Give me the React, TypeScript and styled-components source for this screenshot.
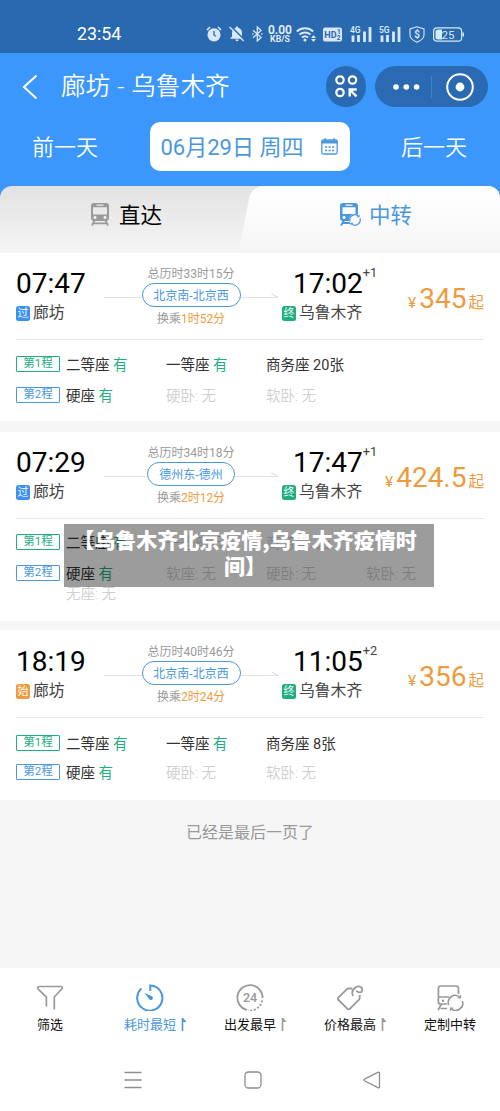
import React from "react";
import styled, { createGlobalStyle } from "styled-components";

const BLUE = "#4a97dd";
const GREEN = "#1fae81";
const ORANGE = "#ee9b40";

const GlobalStyle = createGlobalStyle`
  * { box-sizing: border-box; }
  body {
    margin: 0;
    background: #fff;
    font-family: Roboto, "Noto Sans CJK SC", sans-serif;
    font-weight: 400;
    color: #000;
  }
  svg { display: block; flex: none; }
  svg text { font-family: Roboto, sans-serif; }
`;

const Screen = styled.div`
  position: relative;
  display: flex;
  flex-direction: column;
  width: 500px;
  height: 1111px;
  overflow: hidden;
  white-space: nowrap;
  background: #f5f5f5;
`;

/* Status bar */
const StatusBar = styled.div`
  display: flex;
  align-items: center;
  height: 53px;
  padding: 15px 36px 0 77px;
  background: #2969b0;
  color: #fff;
`;
const Clock = styled.div`
  width: 129px;
  font-size: 17.8px;
  font-weight: 400;
  line-height: 20px;
`;
const StatusIcons = styled.div`
  display: grid;
  grid-template-columns: 23px 23px 15px 29px 27px 27px 29px 30px 24px 31px;
  align-items: center;
  color: #d9e8f8;
`;
const Speed = styled.div`
  width: 26px;
  font-size: 12px;
  font-weight: 600;
  line-height: 10px;
  text-align: center;
  color: #eaf3fc;
`;
const SpeedUnit = styled.div`
  font-size: 8.8px;
  line-height: 8px;
`;

/* Header */
const Header = styled.header`
  display: flex;
  flex-direction: column;
  height: 200px;
  background: #3c97fc;
  color: #fff;
`;
const TitleRow = styled.div`
  display: flex;
  align-items: center;
  height: 67px;
  padding: 0 12px 0 22px;
`;
const Title = styled.h1`
  flex: 1;
  margin: 0 0 0 23px;
  font-size: 24.6px;
  word-spacing: 1px;
  font-weight: 350;
  line-height: 30px;
`;
const RoundButton = styled.div`
  display: flex;
  align-items: center;
  justify-content: center;
  width: 40px;
  height: 41px;
  margin-right: 9px;
  border-radius: 21px;
  background: #296ab3;
`;
const Capsule = styled.div`
  display: flex;
  align-items: center;
  width: 113px;
  height: 41px;
  padding-left: 17px;
  border-radius: 21px;
  background: #296ab3;
`;
const CapsuleRule = styled.div`
  width: 1px;
  height: 22px;
  margin: 0 14px 0 11px;
  background: #4582c4;
`;
const DateRow = styled.div`
  display: flex;
  align-items: center;
  justify-content: space-between;
  height: 53px;
  padding: 0 33px 0 32px;
  font-size: 22px;
  font-weight: 350;
`;
const DateText = styled.span`
  padding-bottom: 4px;
`;
const DatePicker = styled.div`
  display: flex;
  align-items: center;
  justify-content: space-between;
  width: 200px;
  height: 49px;
  padding: 0 12px 0 11px;
  border-radius: 10px;
  background: #fff;
  color: ${BLUE};
  font-weight: 400;
`;
const Tabs = styled.nav`
  display: grid;
  grid-template-columns: 245px 255px;
  height: 67px;
  margin-top: 13px;
  overflow: hidden;
  border-radius: 12px 12px 0 0;
  background: linear-gradient(#e2e2e2, #f5f5f5);
`;
const Tab = styled.div<{ $active?: boolean }>`
  position: relative;
  display: flex;
  gap: ${(p) => (p.$active ? 8 : 9)}px;
  padding: 16px 0 0 ${(p) => (p.$active ? 94 : 90)}px;
  font-size: 21.5px;
  line-height: 27px;
  color: ${(p) => (p.$active ? BLUE : "#000")};
  & > * { position: relative; }
  ${(p) =>
    p.$active &&
    `&::before {
      content: "";
      position: absolute;
      inset: 0 -30px 0 0;
      border-radius: 12px 12px 0 0;
      background: linear-gradient(#fff, #f5f5f5);
      transform: skewX(-11deg);
    }`}
`;

/* Journey cards */
const Card = styled.section<{ $height: number; $gap: number }>`
  height: ${(p) => p.$height}px;
  margin-bottom: ${(p) => p.$gap}px;
  padding: 0 16px;
  background: #fff;
`;
const Summary = styled.div<{ $height: number }>`
  display: flex;
  height: ${(p) => p.$height}px;
  padding-top: ${(p) => p.$height - 71}px;
  border-bottom: 1px solid #e6e6e6;
`;
const Stop = styled.div<{ $width: number; $pad?: number }>`
  width: ${(p) => p.$width}px;
  margin-left: ${(p) => p.$pad ?? 0}px;
`;
const Time = styled.div<{ $indent?: number }>`
  display: flex;
  margin-top: 1px;
  padding-left: ${(p) => p.$indent ?? 0}px;
  font-size: 28px;
  line-height: 28px;
`;
const DayShift = styled.span`
  margin-top: -5px;
  font-size: 12.8px;
  line-height: 16px;
  color: #444;
`;
const City = styled.div`
  display: flex;
  align-items: center;
  gap: 3px;
  margin-top: 4px;
  font-size: 15.8px;
  line-height: 22px;
  color: #444;
`;
const Tag = styled.span<{ $color: string }>`
  width: 14px;
  height: 15px;
  border-radius: 2.5px;
  background: ${(p) => p.$color};
  color: #fff;
  font-size: 11px;
  font-weight: 350;
  line-height: 15px;
  text-align: center;
`;
const Transfer = styled.div`
  display: flex;
  flex-direction: column;
  align-items: center;
  width: 174px;
  margin-top: -2px;
  font-size: 12px;
  line-height: 14px;
  color: #999;
`;
const Route = styled.div`
  display: flex;
  align-items: center;
  width: 100%;
  height: 24px;
  margin: 2px 0 5px;
`;
const Line = styled.i`
  flex: 1;
  height: 1px;
  margin-top: 4px;
  background: #e2e2e2;
`;
const ArrowLine = styled(Line)`
  position: relative;
  &::after {
    content: "";
    position: absolute;
    right: 0;
    top: -2px;
    width: 7px;
    height: 1px;
    background: #d8d8d8;
    transform: rotate(28deg);
  }
`;
const Via = styled.span<{ $width: number }>`
  width: ${(p) => p.$width}px;
  height: 24px;
  border: 1.5px solid ${BLUE};
  border-radius: 12px;
  color: ${BLUE};
  line-height: 25px;
  text-align: center;
`;
const Wait = styled.span`
  color: ${ORANGE};
`;
const Price = styled.div`
  display: flex;
  flex: 1;
  align-items: baseline;
  justify-content: flex-end;
  margin-top: 15px;
  color: ${ORANGE};
  font-size: 15.5px;
  line-height: 30px;
`;
const Amount = styled.b`
  margin: 0 2px 0 3px;
  font-size: 28px;
  font-weight: 400;
`;
const Seats = styled.div<{ $top: number; $gap: number }>`
  display: flex;
  flex-direction: column;
  gap: ${(p) => p.$gap}px;
  padding-top: ${(p) => p.$top}px;
`;
const Leg = styled.div`
  display: grid;
  grid-template-columns: 50px 100px 100px 100px 100px;
  align-items: center;
  font-size: 14.5px;
  line-height: 18px;
  color: #333;
`;
const LegTag = styled.span<{ $color: string }>`
  width: 44px;
  height: 16px;
  border: 1px solid ${(p) => p.$color};
  border-radius: 1px;
  color: ${(p) => p.$color};
  font-size: 11.5px;
  line-height: 13px;
  text-align: center;
`;
const Seat = styled.span<{ $off?: boolean }>`
  margin: 2px 0 -2px;
  color: ${(p) => (p.$off ? "#cfcfcf" : "inherit")};
  font-weight: ${(p) => (p.$off ? 350 : 400)};
`;
const Has = styled.em`
  font-style: normal;
  color: ${GREEN};
`;
const SoldOutRow = styled.div`
  margin-top: 4px;
  padding-left: 50px;
  font-size: 14.5px;
  font-weight: 350;
  line-height: 18px;
  color: #cfcfcf;
`;
const EndNote = styled.p`
  flex: 1;
  margin: 0;
  padding-top: 23px;
  font-size: 16px;
  line-height: 20px;
  text-align: center;
  color: #999;
`;

/* Bottom bars */
const SortBar = styled.footer`
  display: grid;
  grid-template-columns: repeat(5, 100px);
  height: 80px;
  background: #fff;
`;
const SortItem = styled.div<{ $active?: boolean }>`
  display: flex;
  flex-direction: column;
  align-items: center;
  padding-top: 15px;
  color: ${(p) => (p.$active ? BLUE : "#999")};
`;
const SortLabel = styled.span<{ $active?: boolean }>`
  position: relative;
  margin-top: 5px;
  font-size: 13px;
  line-height: 18px;
  color: ${(p) => (p.$active ? BLUE : "#111")};
`;
const Flag = styled.svg<{ $active?: boolean }>`
  position: absolute;
  left: calc(100% + 5px);
  top: 2px;
  color: ${(p) => (p.$active ? BLUE : "#999")};
`;
const NavBar = styled.div`
  display: flex;
  justify-content: space-between;
  height: 63px;
  padding: 23px 119px 0 124px;
  background: #fff;
  color: #8e8e8e;
`;

const Caption = styled.div`
  position: absolute;
  left: 64px;
  top: 524px;
  width: 370px;
  height: 63px;
  padding: 2px 8px 0 0;
  background: rgba(0, 0, 0, 0.39);
  color: #fff;
  font-family: "Noto Sans CJK SC", sans-serif;
  font-size: 21px;
  font-weight: 900;
  line-height: 26px;
  text-align: center;
`;

const stroke = { fill: "none", stroke: "currentColor" } as const;

const AlarmIcon = () => (
  <svg width="16" height="16" viewBox="0 0 16 16">
    <path d="M1 4 4 1M15 4 12 1" {...stroke} strokeWidth="1.7" />
    <circle cx="8" cy="8.8" r="6.6" fill="currentColor" />
    <path d="M8 5v4l2 1.3" fill="none" stroke="#2969b0" strokeWidth="1.3" />
  </svg>
);
const MutedIcon = () => (
  <svg width="16" height="16" viewBox="0 0 16 16">
    <path d="M8 .5c.8 0 1.2.5 1.2 1.3C11.600 2.400 13 4.300 13 6.700V10.500L15 12.700H1L3 10.500V6.700C3 4.300 4.400 2.400 6.800 1.800 6.800 1 7.200.5 8 .5ZM6.300 13.500h3.400a1.700 1.700 0 0 1-3.400 0Z" fill="currentColor" />
    <path d="M1.600 0 16 14.400" stroke="#2969b0" strokeWidth="1.5" />
    <path d="M.6 1 14.600 15" stroke="currentColor" strokeWidth="1.4" />
  </svg>
);
const BluetoothIcon = () => (
  <svg width="11" height="16" viewBox="0 0 11 16">
    <path d="m1 4.300 8 7.200-3.700 3.500V1L9 4.500 1 11.700M.2 8h1.300M9.200 8h1.300" {...stroke} strokeWidth="1.3" />
  </svg>
);
const WifiIcon = () => (
  <svg width="21" height="16" viewBox="0 0 21 16">
    <path d="M.8 5.500a12 12 0 0 1 16.400 0M3.400 8.600a8.300 8.300 0 0 1 11.200 0M5.900 11.500a4.700 4.700 0 0 1 6.200 0" {...stroke} strokeWidth="1.9" />
    <circle cx="9" cy="14" r="1.600" fill="currentColor" />
    <path d="m17.500 9 2.500 3h-5ZM17.500 16l2.500-3h-5Z" fill="currentColor" />
  </svg>
);
const HdIcon = () => (
  <svg width="19" height="15" viewBox="0 0 19 15">
    <rect y=".5" width="19" height="14" rx="2" fill="currentColor" />
    <g fill="#2969b0" fontWeight="700">
      <text x="1.300" y="11" fontSize="9">HD</text>
      <text x="14" y="7.300" fontSize="6.500">1</text>
      <text x="13.800" y="13.300" fontSize="6.500">2</text>
    </g>
  </svg>
);
const SignalIcon = ({ label }: { label: string }) => (
  <svg width="22" height="17" viewBox="0 0 22 17">
    <text x="0" y="7" fontSize="8.500" fontWeight="600" fill="currentColor">{label}</text>
    <path d="M3 9.500V16M8.500 9v7M14.500 5.500V16M20 1v15" {...stroke} strokeWidth="2.800" />
  </svg>
);
const ShieldIcon = () => (
  <svg width="16" height="17" viewBox="0 0 16 17">
    <path d="M8 .8 15 3v6c0 3.500-3 5.600-7 7.200C4 14.600 1 12.500 1 9V3Z" {...stroke} strokeWidth="1.100" />
    <text x="8" y="12" fontSize="10" textAnchor="middle" fontWeight="600" fill="currentColor">$</text>
  </svg>
);
const BatteryIcon = () => (
  <svg width="31" height="15" viewBox="0 0 31 15">
    <rect x=".6" y=".8" width="28" height="13.400" rx="3.500" {...stroke} strokeWidth="1.200" />
    <path d="M5 2.500h4v10H5a2.500 2.500 0 0 1-2.500-2.500V5A2.500 2.500 0 0 1 5 2.500Z" fill="#cdeef5" />
    <path d="M30.200 5.500v4" {...stroke} strokeWidth="1.500" />
    <text x="8.500" y="11.500" fontSize="11.500" fill="currentColor">25</text>
  </svg>
);
const BackIcon = () => (
  <svg width="16" height="26" viewBox="0 0 16 26">
    <path d="M14.500 1.500 2 13l12.500 11.500" {...stroke} strokeWidth="2" />
  </svg>
);
const AppsIcon = () => (
  <svg width="23" height="23" viewBox="0 0 23 23" {...stroke} strokeWidth="2.200">
    <circle cx="5" cy="5" r="3.700" />
    <circle cx="17.500" cy="5" r="3.700" />
    <circle cx="5" cy="17.500" r="3.700" />
    <path d="M14.700 21.500v-7h7M15 14.800l6.500 6.500" strokeWidth="2.400" />
  </svg>
);
const MoreIcon = () => (
  <svg width="28" height="8" viewBox="0 0 28 8" fill="currentColor">
    <circle cx="4" cy="4" r="2.800" />
    <circle cx="14.300" cy="4" r="2.800" />
    <circle cx="24.600" cy="4" r="2.800" />
  </svg>
);
const TargetIcon = () => (
  <svg width="28" height="28" viewBox="0 0 28 28">
    <circle cx="14" cy="14" r="12.800" {...stroke} strokeWidth="2" />
    <circle cx="14" cy="14" r="4.400" fill="currentColor" />
  </svg>
);
const CalendarIcon = () => (
  <svg width="17" height="17" viewBox="0 0 17 17" {...stroke}>
    <rect x=".8" y="2" width="15.400" height="14" rx="1.500" strokeWidth="1.300" />
    <path d="M.8 4h15.400" strokeWidth="3" />
    <path d="M4 .3v3.200M13 .3v3.200" strokeWidth="1.500" />
    <path d="M4 9h9.500M4 12.500h9.500" strokeWidth="1.700" strokeDasharray="2.200 1.300" />
  </svg>
);
const TrainIcon = () => (
  <svg width="20" height="24" viewBox="0 0 20 24">
    <path fillRule="evenodd" d="M4 1h12c2 0 3 1.300 3 3v12c0 2-1 3-3 3H4c-2 0-3-1-3-3V4c0-1.700 1-3 3-3Zm2.500 1.500v1.200h7V2.500ZM3 5.300v6.400q0 .8.800.8h12.400q.8 0 .8-.8V5.300ZM5 13.800a1.600 1.600 0 1 0 0 3.200 1.600 1.600 0 0 0 0-3.200Zm10 0a1.600 1.600 0 1 0 0 3.200 1.600 1.600 0 0 0 0-3.200Z" fill="#999" />
    <path d="m4.500 18.500-2.500 5M15.500 18.500l2.500 5M4 21.300h12" fill="none" stroke="#999" strokeWidth="1.800" />
  </svg>
);
const TransferTrainIcon = () => (
  <svg width="22" height="24" viewBox="0 0 22 24">
    <path fillRule="evenodd" d="M4 1h12c2 0 3 1.300 3 3v12c0 2-1 3-3 3H4c-2 0-3-1-3-3V4c0-1.700 1-3 3-3Zm2.500 1.500v1.200h7V2.500ZM3.500 5.300V12h13V5.300ZM5 13.800a1.600 1.600 0 1 0 0 3.200 1.600 1.600 0 0 0 0-3.200Z" fill="currentColor" />
    <path d="m5 18.500-3 5M4 21h8" {...stroke} strokeWidth="1.900" />
    <circle cx="16" cy="18" r="6" fill="#fafafa" />
    <path d="M11.100 19.800a5.200 5.200 0 0 1 8.800-5.200M20.900 16.200a5.200 5.200 0 0 1-8.800 5.200" {...stroke} strokeWidth="1.200" />
    <path d="m20.200 12.800-.1 2.200-2.200-.2M11.800 23.200l.1-2.200 2.200.2" {...stroke} strokeWidth=".9" />
  </svg>
);
const FilterIcon = () => (
  <svg width="28" height="28" viewBox="0 0 28 28">
    <path d="M10.400 23.500V14.200L2.500 6.300C1.200 4.800 1.400 3.500 3.200 3.500h21.600c1.800 0 2 1.300.7 2.800L18.300 14v12.500" {...stroke} strokeWidth="1.700" />
  </svg>
);
const TimerIcon = () => (
  <svg width="28" height="28" viewBox="0 0 28 28">
    <path d="M5.500 5.500A12.600 12.600 0 1 0 14.300 2.400V8" {...stroke} strokeWidth="2" />
    <path d="m8.300 9.800 7.500 3.500a2 2 0 1 1-2.700 2.700Z" fill="currentColor" />
  </svg>
);
const Clock24Icon = () => (
  <svg width="28" height="28" viewBox="0 0 28 28">
    <path d="M11 27A12.600 12.600 0 1 1 26.600 15" {...stroke} strokeWidth="1.800" />
    <path d="M26.200 17.500A12.600 12.600 0 0 1 12 27.400" {...stroke} strokeWidth="1.800" strokeDasharray="2 1.700" />
    <text x="14" y="19" fontSize="12.500" fontWeight="500" textAnchor="middle" fill="currentColor">24</text>
  </svg>
);
const PriceTagIcon = () => (
  <svg width="28" height="28" viewBox="0 0 28 28">
    <path d="M16.500 5.500H12.500Q11.500 5.500 10.700 6.300L2.500 14.300Q1.200 15.700 2.500 17L11.200 25.700Q12.600 27 14 25.600L22.800 17Q23.700 16 23.700 15V12" {...stroke} strokeWidth="1.800" />
    <path d="M17.300 13C15.300 10.500 16.300 7.500 18.800 5 21 2.800 24.500 2.800 26 5.200 27 8 25.300 9.700 23.300 9.400 22 9.200 20.800 8.600 20.200 7.800" {...stroke} strokeWidth="1.800" />
  </svg>
);
const CustomTransferIcon = () => (
  <svg width="28" height="28" viewBox="0 0 28 28">
    <path d="M22.500 11V5.500Q22.500 3 20 3H5Q2.400 3 2.400 5.500V19q0 2 2 2H11M2.400 14H13M5.500 21 2 27M4.500 25.500H11" {...stroke} strokeWidth="1.700" />
    <circle cx="7" cy="17.700" r="1.300" fill="currentColor" />
    <path d="M12.700 22a7 7 0 0 1 11.600-7.400M26.300 18A7 7 0 0 1 14.700 25.200" {...stroke} strokeWidth="1.600" />
    <path d="m24.600 12.300-.1 2.700-2.700-.1M14.400 27.700l.1-2.700 2.700.1" {...stroke} strokeWidth="1.200" />
  </svg>
);
const SortFlag = ({ active }: { active?: boolean }) => (
  <Flag $active={active} width="6" height="13" viewBox="0 0 6 13">
    <path d="M.7 0h1.500L5.500 4H2.300v9H.7Z" fill="currentColor" />
  </Flag>
);

type SeatInfo = { name: string; left?: string };
type Journey = {
  height: number; gap: number; summary: number; seatTop: number; seatGap: number;
  depart: string; tag: string; tagColor: string; arrive: string; shift: string;
  total: string; via: string; viaWidth: number; wait: string; price: string;
  legs: SeatInfo[][]; extra?: string;
};

const journeys: Journey[] = [
  {
    height: 168, gap: 11, summary: 87, seatTop: 15, seatGap: 13,
    depart: "07:47", tag: "过", tagColor: "#3d91ee", arrive: "17:02", shift: "+1",
    total: "33时15分", via: "北京南-北京西", viaWidth: 99, wait: "1时52分", price: "345",
    legs: [
      [{ name: "二等座", left: "有" }, { name: "一等座", left: "有" }, { name: "商务座", left: "20张" }],
      [{ name: "硬座", left: "有" }, { name: "硬卧" }, { name: "软卧" }],
    ],
  },
  {
    height: 189, gap: 9, summary: 87, seatTop: 14, seatGap: 13,
    depart: "07:29", tag: "过", tagColor: "#3d91ee", arrive: "17:47", shift: "+1",
    total: "34时18分", via: "德州东-德州", viaWidth: 88, wait: "2时12分", price: "424.5",
    legs: [
      [{ name: "二等座", left: "有" }, { name: "一等座" }, { name: "商务座" }],
      [{ name: "硬座", left: "有" }, { name: "软座" }, { name: "硬卧" }, { name: "软卧" }],
    ],
    extra: "无座",
  },
  {
    height: 170, gap: 0, summary: 88, seatTop: 16, seatGap: 11,
    depart: "18:19", tag: "始", tagColor: ORANGE, arrive: "11:05", shift: "+2",
    total: "40时46分", via: "北京南-北京西", viaWidth: 99, wait: "2时24分", price: "356",
    legs: [
      [{ name: "二等座", left: "有" }, { name: "一等座", left: "有" }, { name: "商务座", left: "8张" }],
      [{ name: "硬座", left: "有" }, { name: "硬卧" }, { name: "软卧" }],
    ],
  },
];

const JourneyCard = ({ j }: { j: Journey }) => (
  <Card $height={j.height} $gap={j.gap}>
    <Summary $height={j.summary}>
      <Stop $width={88}>
        <Time>{j.depart}</Time>
        <City><Tag $color={j.tagColor}>{j.tag}</Tag>廊坊</City>
      </Stop>
      <Transfer>
        <span>总历时{j.total}</span>
        <Route><Line /><Via $width={j.viaWidth}>{j.via}</Via><ArrowLine /></Route>
        <span>换乘<Wait>{j.wait}</Wait></span>
      </Transfer>
      <Stop $width={97} $pad={4}>
        <Time $indent={11}>{j.arrive}<DayShift>{j.shift}</DayShift></Time>
        <City><Tag $color={GREEN}>终</Tag>乌鲁木齐</City>
      </Stop>
      <Price>¥<Amount>{j.price}</Amount>起</Price>
    </Summary>
    <Seats $top={j.seatTop} $gap={j.seatGap}>
      {j.legs.map((seats, i) => (
        <Leg key={i}>
          <LegTag $color={i ? BLUE : GREEN}>第{i + 1}程</LegTag>
          {seats.map((s) => (
            <Seat key={s.name} $off={!s.left}>
              {s.left ? <>{s.name} {s.left === "有" ? <Has>有</Has> : s.left}</> : `${s.name}: 无`}
            </Seat>
          ))}
        </Leg>
      ))}
    </Seats>
    {j.extra && <SoldOutRow>{j.extra}: 无</SoldOutRow>}
  </Card>
);

const sorts = [
  { label: "筛选", icon: <FilterIcon /> },
  { label: "耗时最短", icon: <TimerIcon />, active: true, flag: true },
  { label: "出发最早", icon: <Clock24Icon />, flag: true },
  { label: "价格最高", icon: <PriceTagIcon />, flag: true },
  { label: "定制中转", icon: <CustomTransferIcon /> },
];

export default function App() {
  return (
    <Screen>
      <GlobalStyle />
      <StatusBar>
        <Clock>23:54</Clock>
        <StatusIcons>
          <AlarmIcon />
          <MutedIcon />
          <BluetoothIcon />
          <Speed>0.00<SpeedUnit>KB/S</SpeedUnit></Speed>
          <WifiIcon />
          <HdIcon />
          <SignalIcon label="4G" />
          <SignalIcon label="5G" />
          <ShieldIcon />
          <BatteryIcon />
        </StatusIcons>
      </StatusBar>
      <Header>
        <TitleRow>
          <BackIcon />
          <Title>廊坊 - 乌鲁木齐</Title>
          <RoundButton><AppsIcon /></RoundButton>
          <Capsule><MoreIcon /><CapsuleRule /><TargetIcon /></Capsule>
        </TitleRow>
        <DateRow>
          <DateText>前一天</DateText>
          <DatePicker><DateText>06月29日 周四</DateText><CalendarIcon /></DatePicker>
          <DateText>后一天</DateText>
        </DateRow>
        <Tabs>
          <Tab><TrainIcon /><span>直达</span></Tab>
          <Tab $active><TransferTrainIcon /><span>中转</span></Tab>
        </Tabs>
      </Header>
      {journeys.map((j) => <JourneyCard key={j.depart} j={j} />)}
      <EndNote>已经是最后一页了</EndNote>
      <SortBar>
        {sorts.map((s) => (
          <SortItem key={s.label} $active={s.active}>
            {s.icon}
            <SortLabel $active={s.active}>{s.label}{s.flag && <SortFlag active={s.active} />}</SortLabel>
          </SortItem>
        ))}
      </SortBar>
      <NavBar>
        <svg width="18" height="18" viewBox="0 0 18 18"><path d="M.5 1.500h17M.5 9h17M.5 16.500h17" {...stroke} strokeWidth="1.300" /></svg>
        <svg width="18" height="18" viewBox="0 0 18 18"><rect x="1" y="1" width="16" height="16" rx="3.500" {...stroke} strokeWidth="1.300" /></svg>
        <svg width="18" height="18" viewBox="0 0 18 18"><path d="M1.500 8.200 14.800 1.400Q16.500.8 16.500 2.500v13q0 1.700-1.700 1.100L1.500 9.800q-1-.8 0-1.600Z" {...stroke} strokeWidth="1.300" /></svg>
      </NavBar>
      <Caption>【乌鲁木齐北京疫情,乌鲁木齐疫情时<br />间】</Caption>
    </Screen>
  );
}
